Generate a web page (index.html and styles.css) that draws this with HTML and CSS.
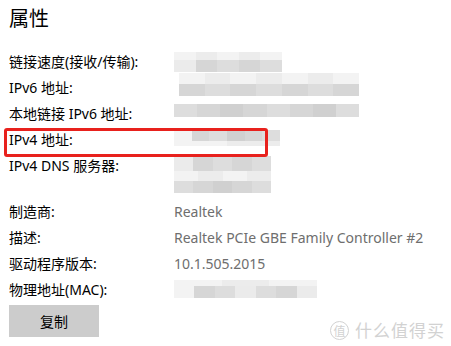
FILE: index.html
```html
<!DOCTYPE html>
<html lang="zh-CN">
<head>
<meta charset="utf-8">
<title>属性</title>
<link rel="stylesheet" href="styles.css">
</head>
<body>
<div class="page">
  <h1 class="title">属性</h1>
  <div class="props">
    <div class="row">
      <div class="label">链接速度(接收/传输):</div>
      <div class="value">
        <div class="blur w108 off-3">
          <div class="band h8 light"><span class="c a"></span><span class="c b"></span><span class="c a"></span><span class="c b"></span><span class="c a"></span></div>
          <div class="band h12"><span class="c b"></span><span class="c d"></span><span class="c c2"></span><span class="c d"></span><span class="c c2"></span></div>
        </div>
      </div>
    </div>
    <div class="row">
      <div class="label">IPv6 地址:</div>
      <div class="value">
        <div class="blur w180 ml5 off-2">
          <div class="band h11 light"><span class="c a"></span><span class="c b"></span><span class="c a"></span><span class="c b"></span><span class="c a"></span><span class="c b"></span><span class="c a"></span></div>
          <div class="band h12"><span class="c d"></span><span class="c c2"></span><span class="c d"></span><span class="c c2"></span><span class="c d"></span><span class="c c2"></span><span class="c d"></span></div>
        </div>
      </div>
    </div>
    <div class="row">
      <div class="label">本地链接 IPv6 地址:</div>
      <div class="value">
        <div class="blur w185">
          <div class="band h13"><span class="c c2"></span><span class="c d"></span><span class="c e"></span><span class="c d"></span><span class="c c2"></span><span class="c d"></span><span class="c e"></span><span class="c c2"></span></div>
        </div>
      </div>
    </div>
    <div class="row">
      <div class="label">IPv4 地址:</div>
      <div class="value">
        <div class="blur w106 off2">
          <div class="band h11"><span class="c a"></span><span class="c d"></span><span class="c c2"></span><span class="c e"></span><span class="c d"></span><span class="c c2"></span></div>
          <div class="band h5 light"><span class="c a"></span><span class="c b"></span></div>
        </div>
      </div>
    </div>
    <div class="row tall">
      <div class="label">IPv4 DNS 服务器:</div>
      <div class="value">
        <div class="blur w97 off2">
          <div class="band h15"><span class="c b"></span><span class="c d"></span><span class="c c2"></span><span class="c d"></span><span class="c c2"></span></div>
          <div class="band h10 light"><span class="c a"></span><span class="c b"></span><span class="c a"></span><span class="c b"></span></div>
          <div class="band h12"><span class="c c2"></span><span class="c d"></span><span class="c e"></span><span class="c d"></span><span class="c c2"></span></div>
        </div>
      </div>
    </div>
    <div class="row">
      <div class="label">制造商:</div>
      <div class="value text">Realtek</div>
    </div>
    <div class="row">
      <div class="label">描述:</div>
      <div class="value text">Realtek PCIe GBE Family Controller #2</div>
    </div>
    <div class="row">
      <div class="label">驱动程序版本:</div>
      <div class="value text">10.1.505.2015</div>
    </div>
    <div class="row">
      <div class="label">物理地址(MAC):</div>
      <div class="value">
        <div class="blur w143">
          <div class="band h6 light"><span class="c a"></span><span class="c b"></span><span class="c a"></span></div>
          <div class="band h12"><span class="c a"></span><span class="c d"></span><span class="c c2"></span><span class="c b"></span><span class="c c2"></span><span class="c d"></span><span class="c b"></span></div>
        </div>
      </div>
    </div>
  </div>
  <button class="copy" type="button">复制</button>
  <div class="highlight"></div>
  <div class="watermark"><span class="seal">值</span><span class="brand">什么值得买</span></div>
</div>
</body>
</html>
```
FILE: styles.css
```css
html, body {
  margin: 0;
  padding: 0;
  background: #ffffff;
}
body {
  width: 451px;
  height: 346px;
  overflow: hidden;
  font-family: "Noto Sans", "Noto Sans CJK SC", sans-serif;
  color: #000000;
}
.page {
  position: relative;
  height: 346px;
  padding-left: 9px;
  box-sizing: border-box;
}
.title {
  margin: 4px 0 0 0;
  font-size: 20px;
  line-height: 28px;
  font-weight: 400;
  font-family: "Noto Sans CJK SC", sans-serif;
}
.props {
  margin-top: 17px;
}
.row {
  display: flex;
  height: 26px;
  align-items: flex-start;
  font-size: 14px;
  line-height: 26px;
}
.row.tall {
  height: 46px;
}
.label {
  width: 165px;
  flex: none;
  font-family: "Noto Sans", "Noto Sans CJK SC", sans-serif;
}
.value {
  flex: 1;
}
.value.text {
  color: #6e6e6e;
}
.blur {
  display: flex;
  flex-direction: column;
  margin-top: 3px;
}
.blur.off-3 { margin-top: 3px; }
.blur.off-2 { margin-top: -2px; }
.blur.off2 { margin-top: 3px; }
.ml5 { margin-left: 5px; }
.w97 { width: 97px; }
.w106 { width: 106px; }
.w108 { width: 108px; }
.w143 { width: 143px; }
.w180 { width: 180px; }
.w185 { width: 185px; }
.band {
  display: flex;
}
.h5 { height: 5px; }
.h6 { height: 6px; }
.h8 { height: 8px; }
.h10 { height: 10px; }
.h11 { height: 11px; }
.h12 { height: 12px; }
.h13 { height: 13px; }
.h15 { height: 15px; }
.c {
  flex: 1;
  background: #dedede;
}
.c.a { background: #f3f3f3; }
.c.b { background: #ebebeb; }
.c.c2 { background: #dddddd; }
.c.d { background: #d6d6d6; }
.c.e { background: #d0d0d0; }
.band.light .c.b { background: #ececec; }
.copy {
  display: block;
  margin-top: 2px;
  width: 90px;
  height: 32px;
  border: none;
  background: #cccccc;
  color: #000000;
  font-family: "Noto Sans CJK SC", sans-serif;
  font-size: 14px;
  padding: 0;
}
.highlight {
  position: absolute;
  left: 4px;
  top: 124px;
  width: 258px;
  height: 23px;
  border: 3px solid #e8211d;
  border-radius: 3px;
}
.watermark {
  position: absolute;
  left: 330px;
  top: 315px;
  display: flex;
  align-items: center;
  gap: 6px;
  color: #d2d2d2;
  font-family: "Noto Sans CJK SC", sans-serif;
}
.seal {
  width: 17px;
  height: 17px;
  border: 1px solid #d2d2d2;
  border-radius: 50%;
  font-size: 12px;
  line-height: 17px;
  text-align: center;
}
.brand {
  font-size: 17px;
  line-height: 22px;
  letter-spacing: 1px;
}
```
